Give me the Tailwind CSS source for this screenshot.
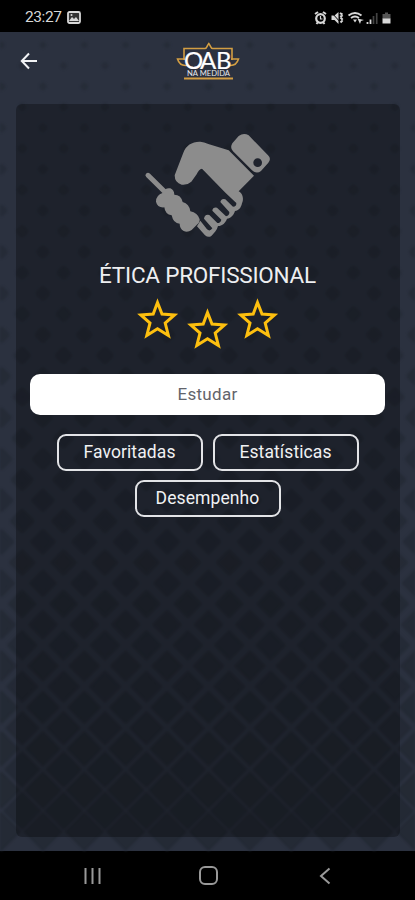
<!DOCTYPE html>
<html lang="pt-BR">
<head>
<meta charset="utf-8">
<title>OAB na Medida</title>
<script src="https://cdn.jsdelivr.net/npm/@tailwindcss/browser@4"></script>
</head>
<body class="bg-black font-['Roboto',sans-serif]">
<div class="flex h-[900px] w-[415px] flex-col overflow-hidden bg-black">
  <header class="flex h-8 shrink-0 items-center justify-between pt-[3px] pr-[22px] pl-[25px] text-[#d8d8d8]">
    <div class="flex items-center gap-[5px]">
      <span class="text-[15.500px] leading-none tracking-[-0.4px]">23:27</span>
      <svg width="14" height="13" viewBox="0 0 14 13"><rect x="1" y="1" width="12" height="11" rx="1.5" fill="#333" stroke="currentColor" stroke-width="1.8"/><path d="M2 10l3-4 2 2 2-2 3 4z" fill="currentColor"/><circle cx="4.5" cy="4" r="1" fill="currentColor"/></svg>
    </div>
    <svg width="80" height="16" viewBox="0 0 80 16" fill="none" stroke="currentColor">
      <circle cx="7.5" cy="8.5" r="4.3" stroke-width="2.2"/><path d="M2 4l3-2M13 4l-3-2M3.5 14l1.5-2M11.500 14l-1.500-2" stroke-width="2"/><path d="M7.500 6v3h2" stroke-width="1.200"/>
      <path d="M18.500 5.500h3l4-3.500v12l-4-4h-3z" fill="currentColor" stroke="none"/><path d="M18 2l11 12" stroke="#000" stroke-width="1"/><path d="M27 3l3 2-3 2 3 3-3 3" stroke-width="2" stroke-dasharray="3 1"/>
      <path d="M35.500 5.500q6.500-5 13 0M38 8q4-3 8 0" stroke-width="1.900"/><path d="M40 9.500h4l-2 3zM44.500 8.500l2.500 5.500 1-3 3-1z" fill="currentColor" stroke="none"/>
      <path d="M54.500 14v-2M57.500 14v-4.500" stroke-width="1.800"/><path d="M60.500 14V6M63.700 14V3" stroke="#444" stroke-width="1.700"/>
      <path d="M72 2.500h3v1.500h2.500v5h-8V4H72z" fill="#555" stroke="none"/><path d="M69.500 8.500h8v5h-8z" fill="currentColor" stroke="none"/>
    </svg>
  </header>

  <main class="relative isolate flex h-[819px] shrink-0 flex-col bg-[#2b313f]">
    <svg id="pattern" class="absolute inset-0 -z-10 blur-[0.8px]" width="415" height="819" fill="#242a35" stroke="#242a35" stroke-linejoin="round"></svg>
    <div class="grid h-[72px] grid-cols-[1fr_70px_1fr] items-start">
      <svg class="mt-5 ml-5" width="18" height="18" viewBox="0 0 18 18" fill="none" stroke="#f2f3f5" stroke-width="2"><path d="M17 9H2M9 1.500L1.800 9 9 16.500"/></svg>
      <svg class="mt-[9px]" width="70" height="42" viewBox="0 0 70 42">
        <g fill="none" stroke="#d39e43" stroke-width="1.600"><path d="M11 19V7.500h21c2 0 2-3 3.800-5 1.800 2 1.800 5 3.800 5H59V19"/><path d="M12 18H4.500q2 6.500 8 6.500h2M58 18h7.500q-2 6.500-8 6.500h-2"/><path d="M11 37.400h49" stroke-width="2"/></g>
        <text x="11 27 43" y="27.500" font-family="Lato" font-size="24" fill="#fff" stroke="#fff" stroke-width=".2">OAB</text>
        <text x="35.500" y="35" text-anchor="middle" textLength="43" lengthAdjust="spacingAndGlyphs" font-family="Lato" font-weight="400" font-size="7.500" fill="#e8eaed">NA MEDIDA</text>
      </svg>
    </div>

    <section class="mx-auto flex h-[733px] w-[384px] flex-col items-center rounded-md bg-black/29 pt-4">
      <svg width="155" height="130" viewBox="0 0 465 390" class="shrink-0" fill="#8c8c8c">
        <path d="M134 166L160 98C168 76 187 64 211 65Q222 66 235 72L296 91L372 167L326 214C339 220 342 240 336 250C333 264 326 272 315 273C311 286 302 295 291 296C287 308 277 318 264 318C261 331 252 339 244 348Q235 354 225 346L201 319L211 302L231 328Q240 336 247 325L222 296Q224 282 238 285L262 309Q272 309 274 299L247 272Q248 261 261 263L288 289Q299 286 298 276L271 246Q274 234 286 238L309 260Q320 260 319 249L287 219L216 146Q206 148 200 163L184 185Q172 196 155 194Q134 189 134 166Z"/>
        <path d="M326 48Q341 37 356 46L414 106Q425 116 415 128L393 153Q380 163 366 151L309 94Q299 83 307 70Z"/>
        <circle cx="383" cy="128" r="13" fill="#1f232d"/>
        <path d="M54 166L108 219" stroke="#8c8c8c" stroke-width="15" stroke-linecap="round"/>
        <path d="M99 218Q106 202 121 205Q132 209 133 224Q153 224 158 246Q178 251 181 274Q203 278 209 298Q210 308 199 316L185 330Q173 338 161 333Q149 326 149 311Q130 311 125 286Q105 283 103 262Q82 264 78 245Q77 226 99 218Z"/>
      </svg>
      <h1 class="mt-[11px] text-[22.500px] leading-7 font-normal tracking-[-0.22px] text-[#eeeff1]">ÉTICA PROFISSIONAL</h1>
      <div class="mt-[9px] flex gap-2 text-[#fdbf0f]">
        <svg width="42" height="42" viewBox="0 0 42 42" fill="none" stroke="currentColor" stroke-width="3"><path d="M20.500 4.500L25 16 37.500 17 28.200 25 31.400 37.500 20.500 30.700 9.800 37.500 13 25 3.800 17 16.200 16Z"/></svg>
        <svg class="mt-[10px]" width="42" height="42" viewBox="0 0 42 42" fill="none" stroke="currentColor" stroke-width="3"><path d="M20.500 4.500L25 16 37.500 17 28.200 25 31.400 37.500 20.500 30.700 9.800 37.500 13 25 3.800 17 16.200 16Z"/></svg>
        <svg width="42" height="42" viewBox="0 0 42 42" fill="none" stroke="currentColor" stroke-width="3"><path d="M20.500 4.500L25 16 37.500 17 28.200 25 31.400 37.500 20.500 30.700 9.800 37.500 13 25 3.800 17 16.200 16Z"/></svg>
      </div>
      <button class="mt-6 h-[41px] w-[355px] rounded-[10px] bg-white text-[17px] tracking-[0.3px] text-[#62646b]">Estudar</button>
      <div class="mt-[19px] flex w-[330px] flex-wrap justify-center gap-x-[10px] gap-y-[9px] text-[17.500px] tracking-[0.1px] text-[#f0f1f3]">
        <button class="h-[37px] w-[146px] rounded-[9px] border-2 border-[#e3e4e7]">Favoritadas</button>
        <button class="h-[37px] w-[146px] rounded-[9px] border-2 border-[#e3e4e7]">Estatísticas</button>
        <button class="h-[37px] w-[146px] rounded-[9px] border-2 border-[#e3e4e7]">Desempenho</button>
      </div>
    </section>
  </main>

  <nav class="flex flex-1 items-center text-[#999]">
    <svg class="ml-[84px]" width="17" height="18" viewBox="0 0 17 18" stroke="currentColor" stroke-width="2"><path d="M1.500 1v16M8.500 1v16M15.500 1v16"/></svg>
    <svg class="ml-[98px]" width="19" height="19" viewBox="0 0 19 19" fill="none" stroke="currentColor" stroke-width="2"><rect x="1" y="1" width="17" height="17" rx="5"/></svg>
    <svg class="ml-[101px]" width="12" height="18" viewBox="0 0 12 18" fill="none" stroke="currentColor" stroke-width="2"><path d="M10.500 1.500L2 9l8.500 7.500"/></svg>
  </nav>
</div>
<script>
// Halftone backdrop: small dots at the top grow into touching diamonds at the bottom.
const pitch = 41.4, rows = 39;
let marks = '';
for (let r = 0; r < rows; r++) {
  const y = 13 + r * 20.7, t = r / (rows - 1);
  const size = 4 + 15.6 * Math.pow(t, 1.1), round = Math.min(size, 9 * (1 - t) + 1.5);
  const d = size - round * 0.7;
  let row = '';
  for (let c = -1; c < 11; c++) {
    const x = 1.500 + (c + (r % 2) / 2) * pitch;
    row += `M${x} ${y - d}L${x + d} ${y}L${x} ${y + d}L${x - d} ${y}Z`;
  }
  marks += `<path opacity="${0.6 + 0.4 * t}" stroke-width="${round}" d="${row}"/>`;
}
document.getElementById('pattern').innerHTML = marks;
</script>
</body>
</html>
